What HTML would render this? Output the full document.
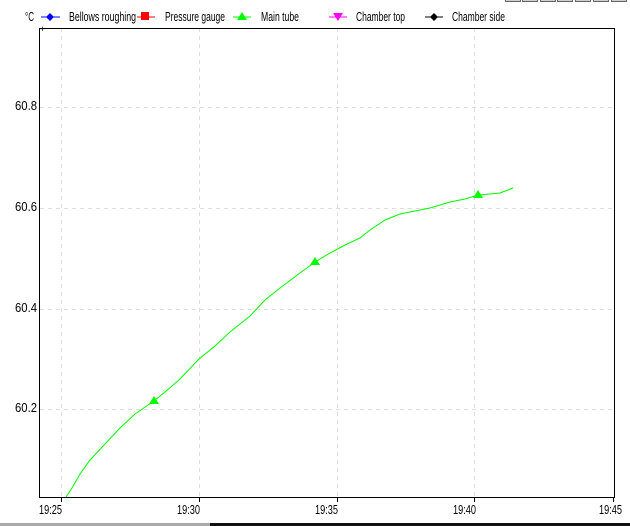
<!DOCTYPE html><html><head><style>
body{margin:0;width:630px;height:526px;background:#fff;overflow:hidden;font-family:"Liberation Sans",sans-serif;font-size:11px;}
</style></head><body>
<svg width="630" height="526" style="position:absolute;left:0;top:0" font-family="Liberation Sans, sans-serif" font-size="12.5">
<g fill="#ccc" stroke="#666" stroke-width="1">
<rect x="505.5" y="-2" width="15" height="3.5"/><rect x="522.5" y="-2" width="15" height="3.5"/><rect x="540.5" y="-2" width="15" height="3.5"/><rect x="557.5" y="-2" width="15" height="3.5"/><rect x="575.5" y="-2" width="15" height="3.5"/><rect x="593.5" y="-2" width="15" height="3.5"/><rect x="611.5" y="-2" width="15" height="3.5"/>
</g>
<text x="25" y="21" textLength="9" lengthAdjust="spacingAndGlyphs">°C</text>
<line x1="41" y1="17" x2="60" y2="17" stroke="#00f"/><path d="M50 13l4 4-4 4-4-4z" fill="#00f"/><text x="69" y="21" textLength="67" lengthAdjust="spacingAndGlyphs">Bellows roughing</text>
<line x1="137" y1="17" x2="155" y2="17" stroke="#f00"/><rect x="141" y="12" width="8" height="8" fill="#f00"/><text x="165" y="21" textLength="60" lengthAdjust="spacingAndGlyphs">Pressure gauge</text>
<line x1="233" y1="17" x2="251" y2="17" stroke="#0f0"/><path d="M242 12l5 8h-10z" fill="#0f0"/><text x="261" y="21" textLength="38" lengthAdjust="spacingAndGlyphs">Main tube</text>
<line x1="329" y1="17" x2="347" y2="17" stroke="#f0f"/><path d="M333 13h10l-5 8z" fill="#f0f"/><text x="356" y="21" textLength="49" lengthAdjust="spacingAndGlyphs">Chamber top</text>
<line x1="425" y1="17" x2="443" y2="17" stroke="#000"/><path d="M434 13l4 4-4 4-4-4z" fill="#000"/><text x="452" y="21" textLength="53" lengthAdjust="spacingAndGlyphs">Chamber side</text>
<g stroke="#ddd" stroke-dasharray="4,4">
<line x1="61.5" y1="28" x2="61.5" y2="498"/><line x1="199.5" y1="28" x2="199.5" y2="498"/><line x1="337.5" y1="28" x2="337.5" y2="498"/><line x1="474.5" y1="28" x2="474.5" y2="498"/>
<line x1="40" y1="107.5" x2="614" y2="107.5"/><line x1="40" y1="208.5" x2="614" y2="208.5"/><line x1="40" y1="309.5" x2="614" y2="309.5"/><line x1="40" y1="409.5" x2="614" y2="409.5"/>
</g>
<rect x="39.5" y="28.5" width="575" height="469" fill="none" stroke="#000"/>
<text x="40" y="32" font-size="9">+</text>
<g stroke="#000"><line x1="61.5" y1="498" x2="61.5" y2="502"/><line x1="199.5" y1="498" x2="199.5" y2="502"/><line x1="337.5" y1="498" x2="337.5" y2="502"/><line x1="474.5" y1="498" x2="474.5" y2="502"/><line x1="613.5" y1="498" x2="613.5" y2="502"/></g>
<g><text x="15" y="110" textLength="22" lengthAdjust="spacingAndGlyphs">60.8</text><text x="15" y="211" textLength="22" lengthAdjust="spacingAndGlyphs">60.6</text><text x="15" y="312" textLength="22" lengthAdjust="spacingAndGlyphs">60.4</text><text x="15" y="412" textLength="22" lengthAdjust="spacingAndGlyphs">60.2</text></g>
<g><text x="39" y="514" textLength="23" lengthAdjust="spacingAndGlyphs">19:25</text><text x="177" y="514" textLength="23" lengthAdjust="spacingAndGlyphs">19:30</text><text x="315" y="514" textLength="23" lengthAdjust="spacingAndGlyphs">19:35</text><text x="453" y="514" textLength="23" lengthAdjust="spacingAndGlyphs">19:40</text><text x="599" y="514" textLength="23" lengthAdjust="spacingAndGlyphs">19:45</text></g>
<polyline fill="none" stroke="#0f0" points="66,497 72,488 80,474 90,460 105,444 120,428 135,414 154,401 165,392 180,379 199,359 215,346 230,332 250,316 265,300 280,288 300,273 315,262 330,253 345,245 360,238 370,230 385,220 400,214 415,211 430,208 450,202 465,199 478,195 490,194 500,193 513,188"/>
<path d="M154 396l5 8h-10zM315 257l5 8h-10zM478 190l5 8h-10z" fill="#0f0"/>
<rect x="0" y="523" width="210" height="3" fill="#aaa"/><rect x="210" y="523" width="420" height="3" fill="#111"/>
</svg>
</body></html>
